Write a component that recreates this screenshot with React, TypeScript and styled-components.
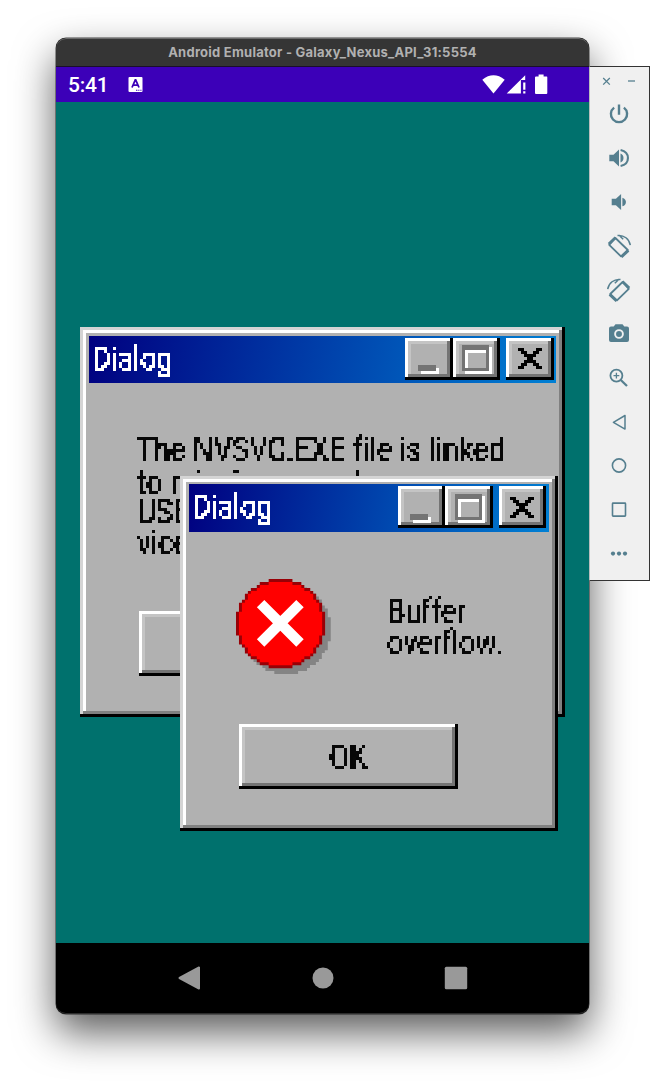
import React from "react";
import styled, { createGlobalStyle } from "styled-components";

const GlobalStyle = createGlobalStyle`
  * { box-sizing: border-box; }
  body { margin: 0; background: #fff; overflow: hidden; }
`;

const Page = styled.main`
  display: flex;
  align-items: flex-start;
  width: 650px;
  height: 1088px;
  padding: 38px 0 0 56px;
  overflow: hidden;
`;

const Phone = styled.section`
  display: flex;
  flex-direction: column;
  flex: none;
  width: 533px;
  height: 976px;
  border-radius: 10px;
  overflow: hidden;
  background: #000;
  box-shadow: 0 0 0 0.5px rgba(0, 0, 0, 0.7), 0 18px 40px rgba(0, 0, 0, 0.65);
`;

const WindowTitle = styled.header`
  height: 29px;
  flex: none;
  display: flex;
  align-items: center;
  justify-content: center;
  padding-bottom: 1px;
  border-bottom: 1px solid #1a0f2c;
  background: #353535;
  box-shadow: inset 0 1px 0 #6a6a6a;
  border-radius: 10px 10px 0 0;
  color: #b1b1b1;
  font: 700 13px Inter, sans-serif;
  letter-spacing: 0.24px;
  white-space: nowrap;
`;

const StatusBar = styled.div`
  height: 35px;
  flex: none;
  display: flex;
  align-items: center;
  padding: 0 41px 0 12px;
  background: #3c00b8;
  color: #fff;
`;

const Clock = styled.span`
  width: 60px;
  font: 500 21px/35px Roboto, sans-serif;
  letter-spacing: -0.2px;
  padding-top: 1px;
`;

const StatusIcons = styled.div`
  display: flex;
  align-items: center;
  margin-left: auto;
`;

const Desktop = styled.div`
  position: relative;
  height: 841px;
  flex: none;
  background: #00716d;
`;

const NavBar = styled.nav`
  flex: 1;
  display: flex;
  align-items: center;
  justify-content: center;
  gap: 109px;
  padding: 0 0 1px 0;
  box-shadow: inset 0 -1px 0 #2c2c2c;
  border-radius: 0 0 10px 10px;
`;

const Dialog = styled.article<{ $x: number; $y: number; $w: number; $h: number }>`
  position: absolute;
  left: ${(p) => p.$x}px;
  top: ${(p) => p.$y}px;
  width: ${(p) => p.$w}px;
  height: ${(p) => p.$h}px;
  padding: 8.6px 9px 9px;
  background: #b1b1b1;
  box-shadow: inset -3px -3px 0 #000, inset 3px 3px 0 #d4d4d4,
    inset -6px -6px 0 #808080, inset 6px 6px 0 #fff;
`;

const TitleBar = styled.header`
  height: 47.4px;
  display: flex;
  align-items: center;
  padding: 0 2.5px 0 3px;
  background: linear-gradient(100deg, #000080, #0080d4);
`;

const ButtonFace = styled.button`
  display: flex;
  align-items: center;
  justify-content: center;
  margin: 0;
  padding: 0;
  border: 0;
  background: #b1b1b1;
  color: #080808;
  box-shadow: inset -3px -3px 0 #000, inset 3px 3px 0 #fff,
    inset -6px -6px 0 #747474, inset 6px 6px 0 #c4c4c4;
`;

const CaptionButton = styled(ButtonFace)<{ $gap?: boolean }>`
  width: 47.4px;
  height: 42px;
  margin-top: -1px;
  margin-left: ${(p) => (p.$gap ? 6 : 0)}px;
`;

const ActionButton = styled(ButtonFace)`
  width: 218.5px;
  height: 65px;
  margin-left: 50px;
`;

const Line = styled.div<{ $drop?: number }>`
  height: 31px;
  transform: translateY(${(p) => p.$drop ?? 0}px);
  filter: url(#bitmap);
`;

const Glyphs = styled.span<{ $size: number; $scale: number }>`
  display: block;
  font: 400 ${(p) => p.$size}px/31px Roboto, sans-serif;
  font-variant-ligatures: none;
  white-space: nowrap;
  transform: scaleX(${(p) => p.$scale});
  transform-origin: left;
`;

const Caption = styled.div`
  flex: 1;
  width: 0;
  color: #fff;
`;

const Content = styled.div<{ $top: number; $height: number }>`
  display: flex;
  align-items: flex-start;
  height: ${(p) => p.$height}px;
  padding: ${(p) => p.$top}px 0 0 47px;
  color: #080808;
`;

const Message = styled.div<{ $left?: number; $top?: number }>`
  margin: ${(p) => p.$top ?? 0}px 0 0 ${(p) => p.$left ?? 0}px;
`;

const ActionLabel = styled.div`
  width: 39px;
  margin-top: 2px;
`;

const Toolbar = styled.aside`
  position: relative;
  flex: none;
  width: 61px;
  height: 515px;
  margin-top: 28px;
  border: 1px solid #333;
  border-left-color: #b9bdbd;
  background: #f0f0f0;
  color: #557f8f;
`;

const WindowControls = styled.div`
  display: flex;
  justify-content: space-between;
  height: 25px;
  padding: 9px 13px 0 12px;
`;

const Tools = styled.div`
  display: flex;
  flex-direction: column;
  align-items: center;
  padding-right: 2px;
`;

const Tool = styled.div`
  height: 43.95px;
  display: flex;
  align-items: center;
  justify-content: center;
`;

const FilterDefs = styled.svg`
  position: absolute;
  width: 0;
  height: 0;
`;

/* Snaps text to 3px cells so that it reads like an enlarged bitmap font. */
function BitmapFilter() {
  return (
    <FilterDefs aria-hidden>
      <filter id="bitmap" x="-5%" y="-15%" width="115%" height="130%" colorInterpolationFilters="sRGB">
        <feComponentTransfer in="SourceGraphic" result="hard">
          <feFuncA type="discrete" tableValues="0 1 1 1 1" />
        </feComponentTransfer>
        <feFlood x="1" y="1" width="1" height="1" />
        <feComposite x="0" y="0" width="3" height="3" />
        <feTile result="grid" />
        <feComposite in="hard" in2="grid" operator="in" />
        <feMorphology operator="dilate" radius="1" />
      </filter>
    </FilterDefs>
  );
}

interface RetroTextProps {
  children: string;
  size?: number;
  scale?: number;
  drop?: number;
}

function RetroText({ children, size = 33, scale = 0.88, drop }: RetroTextProps) {
  return (
    <Line $drop={drop}>
      <Glyphs $size={size} $scale={scale}>{children}</Glyphs>
    </Line>
  );
}

/* Error badge plotted on a 30 x 30 cell grid with a shadow two cells away. */
const CELL = 2.97;
const DISC_ROWS = Array.from({ length: 30 }, (_, y) => {
  const dy = y - 14.5;
  return Math.floor(Math.sqrt(225 - dy * dy) + 0.5);
});

function discPath(shrink: number) {
  return DISC_ROWS.map((half, y) => {
    const next = Math.min(half, DISC_ROWS[y - 1] ?? 0, DISC_ROWS[y + 1] ?? 0);
    const h = shrink ? Math.min(half - 1, next) : half;
    return h > 0 ? `M${15 - h} ${y}h${h * 2}v1.05h${-h * 2}z` : "";
  }).join("");
}

function ErrorIcon() {
  return (
    <svg width="95" height="95" viewBox="0 0 95 95">
      <g transform={`scale(${CELL})`}>
        <path d={discPath(0)} fill="#848484" transform="translate(1.9 1.9)" />
        <path d={discPath(0)} fill="#980006" />
        <path d={discPath(1)} fill="#ff0000" />
      </g>
      <path d="M24.6 24.6 64 64M64 24.6 24.6 64" stroke="#fff" strokeWidth="10.5" />
    </svg>
  );
}

const CROSS = ["##....##", ".##..##.", "..####..", "...##...", "..####..", ".##..##.", "##....##"];

function CrossGlyph() {
  return (
    <svg width="24" height="21" viewBox="0 0 8 7" shapeRendering="crispEdges">
      {CROSS.flatMap((row, y) =>
        [...row].map((c, x) => (c === "#" ? <rect key={`${x}-${y}`} x={x} y={y} width="1" height="1" /> : null))
      )}
    </svg>
  );
}

function CaptionBar() {
  return (
    <TitleBar>
      <Caption>
        <RetroText size={32.5}>Dialog</RetroText>
      </Caption>
      <CaptionButton aria-label="Minimize">
        <svg width="47" height="41" viewBox="0 0 47 41">
          <path d="M15 30h18v6H15z" fill="#fff" />
          <path d="M12 27h18v6H12z" fill="#747474" />
        </svg>
      </CaptionButton>
      <CaptionButton aria-label="Maximize">
        <svg width="47" height="41" viewBox="0 0 47 41">
          <path fillRule="evenodd" d="M12 9h27v27H12zM15 15v18h21V15z" fill="#fff" />
          <path fillRule="evenodd" d="M9 7h27v26H9zM12 12v18h21V12z" fill="#747474" />
        </svg>
      </CaptionButton>
      <CaptionButton aria-label="Close" $gap>
        <CrossGlyph />
      </CaptionButton>
    </TitleBar>
  );
}

function RotateGlyph({ flip }: { flip?: boolean }) {
  return (
    <svg width="26" height="26" viewBox="0 0 26 26" fill="none" stroke="currentColor">
      <g transform={flip ? "translate(26 0) scale(-1 1)" : undefined}>
        <path d="M9.4 5 21.8 17 15 23.4 3.2 11.8z" strokeWidth="1.8" strokeLinejoin="round" />
        <path d="M9.6 4.4 2.8 11M22.4 17.4l-7 6.6" strokeWidth="2.8" />
        <path d="M11.5 2.5C18 1.8 23.3 6 24.3 12.2M13 2.3l4.2 4" strokeWidth="1.5" />
      </g>
    </svg>
  );
}

function SideToolbar() {
  return (
    <Toolbar>
      <WindowControls>
        <svg width="9" height="12" viewBox="0 0 9 12" stroke="currentColor" strokeWidth="1.3">
          <path d="m1.2 2 6.6 6.6M7.8 2 1.2 8.6" />
        </svg>
        <svg width="9" height="12" viewBox="0 0 9 12" stroke="currentColor" strokeWidth="1.3">
          <path d="M1 5h7" />
        </svg>
      </WindowControls>
      <Tools>
        <Tool>
          <svg width="22" height="22" viewBox="0 0 22 22" fill="none" stroke="currentColor" strokeWidth="2.4">
            <path d="M11 1.5v10.2M6.1 4.6A8.1 8.1 0 1 0 15.9 4.6" />
          </svg>
        </Tool>
        <Tool>
          <svg width="22" height="22" viewBox="0 0 22 22" fill="currentColor">
            <path d="M1.3 7.7h4.2L11 2.5v17l-5.5-5.2H1.3z" />
            <path d="M12.5 6.5c4 1.2 4 7.8 0 9z" />
            <path d="M12.6 2.9c9.8 2.2 9.8 14 0 16.2" fill="none" stroke="currentColor" strokeWidth="2.1" />
          </svg>
        </Tool>
        <Tool>
          <svg width="22" height="22" viewBox="0 0 22 22" fill="currentColor">
            <path d="M3.7 7.7h4.2l5.2-4.8v16.2l-5.2-4.8H3.7z" />
            <path d="M14.4 6.7c4.7 1.2 4.7 7.4 0 8.6z" />
          </svg>
        </Tool>
        <Tool><RotateGlyph /></Tool>
        <Tool><RotateGlyph flip /></Tool>
        <Tool>
          <svg width="22" height="22" viewBox="0 0 22 22">
            <path d="M7.5 1.2h7l1.8 2.3H19q2 0 2 2v11.6q0 2-2 2H3q-2 0-2-2V5.5q0-2 2-2h2.7z" fill="currentColor" />
            <circle cx="11" cy="11" r="3.9" fill="currentColor" stroke="#f0f0f0" strokeWidth="1.9" />
          </svg>
        </Tool>
        <Tool>
          <svg width="22" height="22" viewBox="0 0 22 22" fill="none" stroke="currentColor" strokeWidth="1.8">
            <circle cx="8.4" cy="8.6" r="6" />
            <path d="M5.5 8.6h5.8M8.4 5.7v5.8" strokeWidth="1.3" />
            <path d="m12.8 13 6.2 6" strokeWidth="2.3" />
          </svg>
        </Tool>
        <Tool>
          <svg width="22" height="22" viewBox="0 0 22 22" fill="none" stroke="currentColor" strokeWidth="1.5">
            <path d="M17 4.5v13.6L5.4 11.3z" strokeLinejoin="round" />
          </svg>
        </Tool>
        <Tool>
          <svg width="22" height="22" viewBox="0 0 22 22" fill="none" stroke="currentColor" strokeWidth="1.6">
            <circle cx="11" cy="11.5" r="6.6" />
          </svg>
        </Tool>
        <Tool>
          <svg width="22" height="22" viewBox="0 0 22 22" fill="none" stroke="currentColor" strokeWidth="1.6">
            <rect x="4.5" y="5.1" width="13" height="13" rx="0.6" />
          </svg>
        </Tool>
        <Tool>
          <svg width="22" height="22" viewBox="0 0 22 22" fill="currentColor">
            <circle cx="5" cy="11.6" r="2.1" />
            <circle cx="11" cy="11.6" r="2.1" />
            <circle cx="17" cy="11.6" r="2.1" />
          </svg>
        </Tool>
      </Tools>
    </Toolbar>
  );
}

export default function App() {
  return (
    <>
      <GlobalStyle />
      <BitmapFilter />
      <Page>
        <Phone>
          <WindowTitle>Android Emulator - Galaxy_Nexus_API_31:5554</WindowTitle>
          <StatusBar>
            <Clock>5:41</Clock>
            <svg width="15" height="16" viewBox="0 0 15 16">
              <rect x="0.5" y="0" width="14" height="15" rx="1" fill="#fff" />
              <path d="m4 10.5 3.3-7.6h.4L11 10.5M5.4 8.1h4.2" fill="none" stroke="#3c00b8" strokeWidth="1.8" />
              <path d="M8 13.2h1.4M10.2 13.2h1.2M12.3 13.2h1.2" stroke="#3c00b8" strokeWidth="1.1" />
            </svg>
            <StatusIcons>
              <svg width="66" height="22" viewBox="0 0 66 22" fill="#fff">
                <path d="M0.3 5.7Q11.5-3.2 22.7 5.7L11.5 19.6z" />
                <path d="M24.7 19.5 43.2 1.2v4.9h-4.3v13.4zM41.2 8.5h2.2v7.2h-2.2zM41.2 17.3h2.2v2.2h-2.2z" />
                <path d="M56.6 0.6h5v1.8h3.2q.5 0 .5 1v15.6q0 1-1 1H54q-1 0-1-1V3.4q0-1 1-1h2.6z" />
              </svg>
            </StatusIcons>
          </StatusBar>
          <Desktop>
            <Dialog $x={24} $y={225} $w={485} $h={390}>
              <CaptionBar />
              <Content $top={51} $height={228}>
                <Message $left={1}>
                  <RetroText>The NVSVC.EXE file is linked</RetroText>
                  <RetroText drop={2}>to missing export</RetroText>
                  <RetroText>USER32.DLL:Ser-</RetroText>
                  <RetroText>vice.</RetroText>
                </Message>
              </Content>
              <ActionButton aria-label="Confirm" />
            </Dialog>
            <Dialog $x={124} $y={373.6} $w={377.6} $h={355}>
              <CaptionBar />
              <Content $top={47} $height={192.4}>
                <ErrorIcon />
                <Message $left={56} $top={17}>
                  <RetroText>Buffer</RetroText>
                  <RetroText scale={0.87}>overflow.</RetroText>
                </Message>
              </Content>
              <ActionButton>
                <ActionLabel>
                  <RetroText size={35} scale={0.84}>OK</RetroText>
                </ActionLabel>
              </ActionButton>
            </Dialog>
          </Desktop>
          <NavBar>
            <svg width="24" height="26" viewBox="0 0 24 26" fill="#999">
              <path d="M21 2.5v21L1.5 13z" stroke="#999" strokeWidth="2" strokeLinejoin="round" />
            </svg>
            <svg width="24" height="26" viewBox="0 0 24 26" fill="#999">
              <circle cx="12" cy="13" r="10.5" />
            </svg>
            <svg width="24" height="26" viewBox="0 0 24 26" fill="#999">
              <rect x="0.8" y="1.8" width="22.4" height="22.4" rx="1.5" />
            </svg>
          </NavBar>
        </Phone>
        <SideToolbar />
      </Page>
    </>
  );
}
